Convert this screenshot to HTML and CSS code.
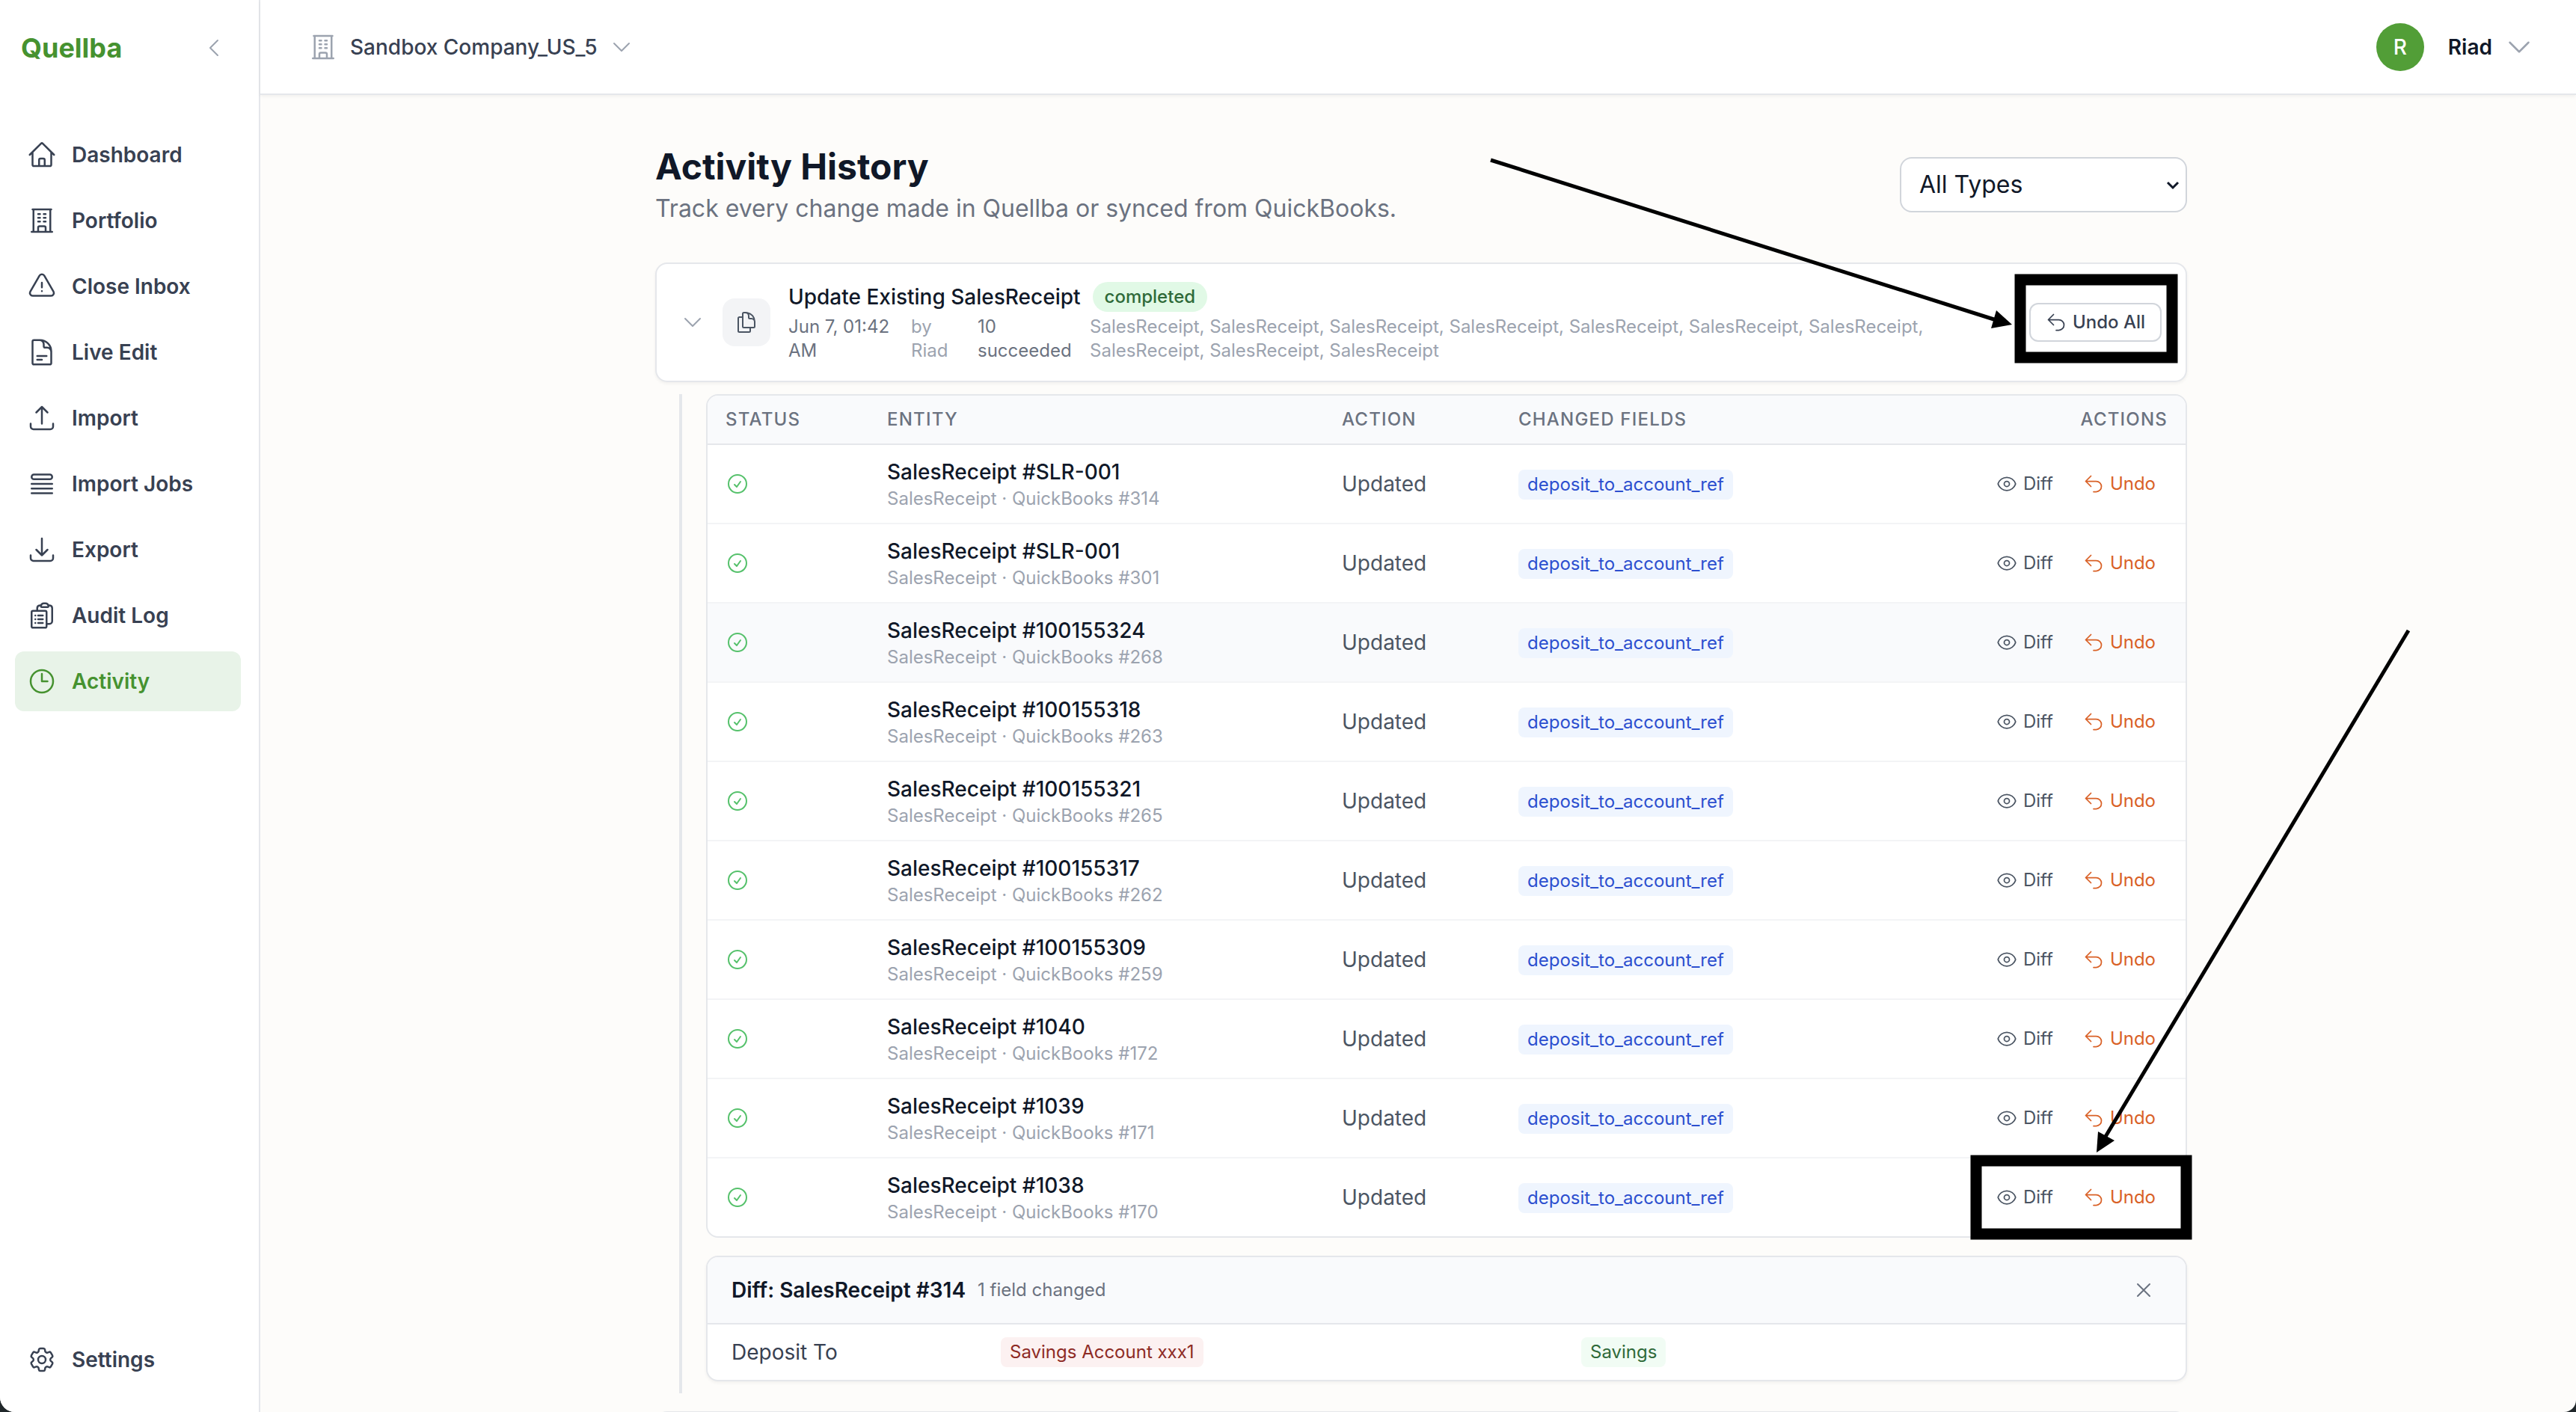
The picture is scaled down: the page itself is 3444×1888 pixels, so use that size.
FILE: index.html
```html
<!DOCTYPE html>
<html lang="en">
<head>
<meta charset="utf-8">
<meta name="viewport" content="width=device-width, initial-scale=1">
<title>Activity History - Quellba</title>
<link rel="stylesheet" href="styles.css">
</head>
<body>
<svg class="sprite" aria-hidden="true">
  <symbol id="home" viewBox="0 0 24 24"><path d="m2.25 12 8.954-8.955c.44-.439 1.152-.439 1.591 0L21.75 12M4.5 9.75v10.125c0 .621.504 1.125 1.125 1.125H9.75v-4.875c0-.621.504-1.125 1.125-1.125h2.25c.621 0 1.125.504 1.125 1.125V21h4.125c.621 0 1.125-.504 1.125-1.125V9.75M8.25 21h8.25"/></symbol>
  <symbol id="building" viewBox="0 0 24 24"><path d="M3.75 21h16.5M4.5 3h15M5.25 3v18m13.5-18v18M9 6.75h1.5m-1.5 3h1.5m-1.5 3h1.5m3-6H15m-1.5 3H15m-1.5 3H15M9 21v-3.375c0-.621.504-1.125 1.125-1.125h3.75c.621 0 1.125.504 1.125 1.125V21"/></symbol>
  <symbol id="warning" viewBox="0 0 24 24"><path d="M12 9v3.75m-9.303 3.376c-.866 1.5.217 3.374 1.948 3.374h14.71c1.73 0 2.813-1.874 1.948-3.374L13.949 3.378c-.866-1.5-3.032-1.5-3.898 0L2.697 16.126ZM12 15.75h.007v.008H12v-.008Z"/></symbol>
  <symbol id="document" viewBox="0 0 24 24"><path d="M19.5 14.25v-2.625a3.375 3.375 0 0 0-3.375-3.375h-1.5A1.125 1.125 0 0 1 13.5 7.125v-1.5a3.375 3.375 0 0 0-3.375-3.375H8.25m0 12.75h7.5m-7.5 3H12M10.5 2.25H5.625c-.621 0-1.125.504-1.125 1.125v17.25c0 .621.504 1.125 1.125 1.125h12.75c.621 0 1.125-.504 1.125-1.125V11.25a9 9 0 0 0-9-9Z"/></symbol>
  <symbol id="upload" viewBox="0 0 24 24"><path d="M3 16.5v2.25A2.25 2.25 0 0 0 5.25 21h13.5A2.25 2.25 0 0 0 21 18.75V16.5m-13.5-9L12 3m0 0 4.5 4.5M12 3v13.5"/></symbol>
  <symbol id="queue" viewBox="0 0 24 24"><path d="M3.75 12h16.5m-16.5 3.75h16.5M3.75 19.5h16.5M5.625 4.5h12.75a1.875 1.875 0 0 1 0 3.75H5.625a1.875 1.875 0 0 1 0-3.75Z"/></symbol>
  <symbol id="download" viewBox="0 0 24 24"><path d="M3 16.5v2.25A2.25 2.25 0 0 0 5.25 21h13.5A2.25 2.25 0 0 0 21 18.75V16.5M16.5 12 12 16.5m0 0L7.5 12m4.5 4.5V3"/></symbol>
  <symbol id="clipboard" viewBox="0 0 24 24"><path d="M9 12h3.75M9 15h3.75M9 18h3.75m3 .75H18a2.25 2.25 0 0 0 2.25-2.25V6.108c0-1.135-.845-2.098-1.976-2.192a48.424 48.424 0 0 0-1.123-.08m-5.801 0c-.065.21-.1.433-.1.664 0 .414.336.75.75.75h4.5a.75.75 0 0 0 .75-.75 2.25 2.25 0 0 0-.1-.664m-5.8 0A2.251 2.251 0 0 1 13.5 2.25H15c1.012 0 1.867.668 2.15 1.586m-5.8 0c-.376.023-.75.05-1.124.08C9.095 4.01 8.25 4.973 8.25 6.108V8.25m0 0H4.875c-.621 0-1.125.504-1.125 1.125v11.25c0 .621.504 1.125 1.125 1.125h9.75c.621 0 1.125-.504 1.125-1.125V9.375c0-.621-.504-1.125-1.125-1.125H8.25ZM6.75 12h.008v.008H6.75V12Zm0 3h.008v.008H6.75V15Zm0 3h.008v.008H6.75V18Z"/></symbol>
  <symbol id="clock" viewBox="0 0 24 24"><path d="M12 6v6h4.5m4.5 0a9 9 0 1 1-18 0 9 9 0 0 1 18 0Z"/></symbol>
  <symbol id="gear" viewBox="0 0 24 24"><path d="M9.594 3.94c.09-.542.56-.94 1.11-.94h2.593c.55 0 1.02.398 1.11.94l.213 1.281c.063.374.313.686.645.87.074.04.147.083.22.127.325.196.72.257 1.075.124l1.217-.456a1.125 1.125 0 0 1 1.37.49l1.296 2.247a1.125 1.125 0 0 1-.26 1.431l-1.003.827c-.293.241-.438.613-.43.992a7.723 7.723 0 0 1 0 .255c-.008.378.137.75.43.991l1.004.827c.424.35.534.955.26 1.43l-1.298 2.247a1.125 1.125 0 0 1-1.369.491l-1.217-.456c-.355-.133-.75-.072-1.076.124a6.47 6.47 0 0 1-.22.128c-.331.183-.581.495-.644.869l-.213 1.281c-.09.543-.56.94-1.11.94h-2.594c-.55 0-1.019-.398-1.11-.94l-.213-1.281c-.062-.374-.312-.686-.644-.87a6.52 6.52 0 0 1-.22-.127c-.325-.196-.72-.257-1.076-.124l-1.217.456a1.125 1.125 0 0 1-1.369-.49l-1.297-2.247a1.125 1.125 0 0 1 .26-1.431l1.004-.827c.292-.24.437-.613.43-.991a6.932 6.932 0 0 1 0-.255c.007-.38-.138-.751-.43-.992l-1.004-.827a1.125 1.125 0 0 1-.26-1.43l1.297-2.247a1.125 1.125 0 0 1 1.37-.491l1.216.456c.356.133.751.072 1.076-.124.072-.044.146-.086.22-.128.332-.183.582-.495.644-.869l.214-1.28Z"/><path d="M15 12a3 3 0 1 1-6 0 3 3 0 0 1 6 0Z"/></symbol>
  <symbol id="left" viewBox="0 0 24 24"><path d="M15.75 19.5 8.25 12l7.5-7.5"/></symbol>
  <symbol id="down" viewBox="0 0 24 24"><path d="m19.5 8.25-7.5 7.5-7.5-7.5"/></symbol>
  <symbol id="copy" viewBox="0 0 24 24"><path d="M15.75 17.25v3.375c0 .621-.504 1.125-1.125 1.125h-9.75a1.125 1.125 0 0 1-1.125-1.125V7.875c0-.621.504-1.125 1.125-1.125H6.75a9.06 9.06 0 0 1 1.5.124m7.5 10.376h3.375c.621 0 1.125-.504 1.125-1.125V11.25c0-4.46-3.243-8.161-7.5-8.876a9.06 9.06 0 0 0-1.5-.124H9.375c-.621 0-1.125.504-1.125 1.125v3.5m7.5 10.375H9.375a1.125 1.125 0 0 1-1.125-1.125v-9.25m12 6.625v-1.875a3.375 3.375 0 0 0-3.375-3.375h-1.5a1.125 1.125 0 0 1-1.125-1.125v-1.5a3.375 3.375 0 0 0-3.375-3.375H9.75"/></symbol>
  <symbol id="undo" viewBox="0 0 24 24"><path d="M9 15 3 9m0 0 6-6M3 9h12a6 6 0 0 1 0 12h-3"/></symbol>
  <symbol id="check" viewBox="0 0 24 24"><path d="M9 12.75 11.25 15 15 9.75M21 12a9 9 0 1 1-18 0 9 9 0 0 1 18 0Z"/></symbol>
  <symbol id="eye" viewBox="0 0 24 24"><path d="M2.036 12.322a1.012 1.012 0 0 1 0-.639C3.423 7.51 7.36 4.5 12 4.5c4.638 0 8.573 3.007 9.963 7.178.07.207.07.431 0 .639C20.577 16.49 16.64 19.5 12 19.5c-4.638 0-8.573-3.007-9.963-7.178Z"/><path d="M15 12a3 3 0 1 1-6 0 3 3 0 0 1 6 0Z"/></symbol>
  <symbol id="close" viewBox="0 0 24 24"><path d="M6 18 18 6M6 6l12 12"/></symbol>
</svg>

<div class="app">
  <aside class="sidebar">
    <div class="brand">
      <a class="logo" href="#">Quellba</a>
      <button class="plain" aria-label="Collapse sidebar"><svg class="icon icon-md"><use href="#left"/></svg></button>
    </div>
    <nav class="nav">
      <a href="#"><svg class="icon"><use href="#home"/></svg>Dashboard</a>
      <a href="#"><svg class="icon"><use href="#building"/></svg>Portfolio</a>
      <a href="#"><svg class="icon"><use href="#warning"/></svg>Close Inbox</a>
      <a href="#"><svg class="icon"><use href="#document"/></svg>Live Edit</a>
      <a href="#"><svg class="icon"><use href="#upload"/></svg>Import</a>
      <a href="#"><svg class="icon"><use href="#queue"/></svg>Import Jobs</a>
      <a href="#"><svg class="icon"><use href="#download"/></svg>Export</a>
      <a href="#"><svg class="icon"><use href="#clipboard"/></svg>Audit Log</a>
      <a href="#" class="active" aria-current="page"><svg class="icon"><use href="#clock"/></svg>Activity</a>
      <a href="#" class="settings"><svg class="icon"><use href="#gear"/></svg>Settings</a>
    </nav>
  </aside>

  <div class="page">
    <header class="topbar">
      <button class="company">
        <svg class="icon"><use href="#building"/></svg>
        <span>Sandbox Company_US_5</span>
        <svg class="icon icon-md"><use href="#down"/></svg>
      </button>
      <button class="user">
        <span class="avatar">R</span>
        <span class="user-name">Riad</span>
        <svg class="icon"><use href="#down"/></svg>
      </button>
    </header>

    <main class="main">
      <div class="content">
        <div class="heading">
          <div>
            <h1>Activity History</h1>
            <p>Track every change made in Quellba or synced from QuickBooks.</p>
          </div>
          <div class="filter">
            <select aria-label="Activity type"><option>All Types</option></select>
            <svg class="filter-arrow" viewBox="0 0 18 12"><path d="m2 2 7 7 7-7"/></svg>
          </div>
        </div>

        <section class="card job">
          <svg class="icon icon-md muted"><use href="#down"/></svg>
          <span class="tile"><svg class="icon icon-md"><use href="#copy"/></svg></span>
          <div class="job-body">
            <div class="job-title"><h2>Update Existing SalesReceipt</h2><span class="badge">completed</span></div>
            <div class="meta">
              <span>Jun 7, 01:42 AM</span>
              <span class="muted">by Riad</span>
              <span>10 succeeded</span>
              <span class="muted">SalesReceipt, SalesReceipt, SalesReceipt, SalesReceipt, SalesReceipt, SalesReceipt, SalesReceipt, SalesReceipt, SalesReceipt, SalesReceipt</span>
            </div>
          </div>
          <button class="undo-all"><svg class="icon icon-sm"><use href="#undo"/></svg>Undo All</button>
        </section>

        <div class="details">
          <div class="table-box">
            <table>
              <colgroup><col class="c-status"><col class="c-entity"><col class="c-action"><col><col class="c-buttons"></colgroup>
              <thead>
                <tr><th>Status</th><th>Entity</th><th>Action</th><th>Changed Fields</th><th class="right">Actions</th></tr>
              </thead>
              <tbody>
                <tr>
                  <td><svg class="icon icon-md ok"><use href="#check"/></svg></td>
                  <td><div class="name">SalesReceipt #SLR-001</div><div class="ref">SalesReceipt · QuickBooks #314</div></td>
                  <td>Updated</td>
                  <td><span class="chip">deposit_to_account_ref</span></td>
                  <td><div class="actions"><button><svg class="icon icon-sm"><use href="#eye"/></svg>Diff</button><button class="undo"><svg class="icon icon-sm"><use href="#undo"/></svg>Undo</button></div></td>
                </tr>
                <tr>
                  <td><svg class="icon icon-md ok"><use href="#check"/></svg></td>
                  <td><div class="name">SalesReceipt #SLR-001</div><div class="ref">SalesReceipt · QuickBooks #301</div></td>
                  <td>Updated</td>
                  <td><span class="chip">deposit_to_account_ref</span></td>
                  <td><div class="actions"><button><svg class="icon icon-sm"><use href="#eye"/></svg>Diff</button><button class="undo"><svg class="icon icon-sm"><use href="#undo"/></svg>Undo</button></div></td>
                </tr>
                <tr class="hovered">
                  <td><svg class="icon icon-md ok"><use href="#check"/></svg></td>
                  <td><div class="name">SalesReceipt #100155324</div><div class="ref">SalesReceipt · QuickBooks #268</div></td>
                  <td>Updated</td>
                  <td><span class="chip">deposit_to_account_ref</span></td>
                  <td><div class="actions"><button><svg class="icon icon-sm"><use href="#eye"/></svg>Diff</button><button class="undo"><svg class="icon icon-sm"><use href="#undo"/></svg>Undo</button></div></td>
                </tr>
                <tr>
                  <td><svg class="icon icon-md ok"><use href="#check"/></svg></td>
                  <td><div class="name">SalesReceipt #100155318</div><div class="ref">SalesReceipt · QuickBooks #263</div></td>
                  <td>Updated</td>
                  <td><span class="chip">deposit_to_account_ref</span></td>
                  <td><div class="actions"><button><svg class="icon icon-sm"><use href="#eye"/></svg>Diff</button><button class="undo"><svg class="icon icon-sm"><use href="#undo"/></svg>Undo</button></div></td>
                </tr>
                <tr>
                  <td><svg class="icon icon-md ok"><use href="#check"/></svg></td>
                  <td><div class="name">SalesReceipt #100155321</div><div class="ref">SalesReceipt · QuickBooks #265</div></td>
                  <td>Updated</td>
                  <td><span class="chip">deposit_to_account_ref</span></td>
                  <td><div class="actions"><button><svg class="icon icon-sm"><use href="#eye"/></svg>Diff</button><button class="undo"><svg class="icon icon-sm"><use href="#undo"/></svg>Undo</button></div></td>
                </tr>
                <tr>
                  <td><svg class="icon icon-md ok"><use href="#check"/></svg></td>
                  <td><div class="name">SalesReceipt #100155317</div><div class="ref">SalesReceipt · QuickBooks #262</div></td>
                  <td>Updated</td>
                  <td><span class="chip">deposit_to_account_ref</span></td>
                  <td><div class="actions"><button><svg class="icon icon-sm"><use href="#eye"/></svg>Diff</button><button class="undo"><svg class="icon icon-sm"><use href="#undo"/></svg>Undo</button></div></td>
                </tr>
                <tr>
                  <td><svg class="icon icon-md ok"><use href="#check"/></svg></td>
                  <td><div class="name">SalesReceipt #100155309</div><div class="ref">SalesReceipt · QuickBooks #259</div></td>
                  <td>Updated</td>
                  <td><span class="chip">deposit_to_account_ref</span></td>
                  <td><div class="actions"><button><svg class="icon icon-sm"><use href="#eye"/></svg>Diff</button><button class="undo"><svg class="icon icon-sm"><use href="#undo"/></svg>Undo</button></div></td>
                </tr>
                <tr>
                  <td><svg class="icon icon-md ok"><use href="#check"/></svg></td>
                  <td><div class="name">SalesReceipt #1040</div><div class="ref">SalesReceipt · QuickBooks #172</div></td>
                  <td>Updated</td>
                  <td><span class="chip">deposit_to_account_ref</span></td>
                  <td><div class="actions"><button><svg class="icon icon-sm"><use href="#eye"/></svg>Diff</button><button class="undo"><svg class="icon icon-sm"><use href="#undo"/></svg>Undo</button></div></td>
                </tr>
                <tr>
                  <td><svg class="icon icon-md ok"><use href="#check"/></svg></td>
                  <td><div class="name">SalesReceipt #1039</div><div class="ref">SalesReceipt · QuickBooks #171</div></td>
                  <td>Updated</td>
                  <td><span class="chip">deposit_to_account_ref</span></td>
                  <td><div class="actions"><button><svg class="icon icon-sm"><use href="#eye"/></svg>Diff</button><button class="undo"><svg class="icon icon-sm"><use href="#undo"/></svg>Undo</button></div></td>
                </tr>
                <tr>
                  <td><svg class="icon icon-md ok"><use href="#check"/></svg></td>
                  <td><div class="name">SalesReceipt #1038</div><div class="ref">SalesReceipt · QuickBooks #170</div></td>
                  <td>Updated</td>
                  <td><span class="chip">deposit_to_account_ref</span></td>
                  <td><div class="actions"><button><svg class="icon icon-sm"><use href="#eye"/></svg>Diff</button><button class="undo"><svg class="icon icon-sm"><use href="#undo"/></svg>Undo</button></div></td>
                </tr>
              </tbody>
            </table>
          </div>

          <section class="card diff">
            <div class="diff-head">
              <h3>Diff: SalesReceipt #314</h3>
              <span class="diff-count">1 field changed</span>
              <button class="plain diff-close" aria-label="Close diff"><svg class="icon icon-md"><use href="#close"/></svg></button>
            </div>
            <div class="diff-row">
              <span>Deposit To</span>
              <span><span class="chip old">Savings Account xxx1</span></span>
              <span><span class="chip new">Savings</span></span>
            </div>
          </section>
        </div>

        <section class="card next"></section>

        <!-- Callouts drawn over the undo controls -->
        <svg class="callouts" viewBox="-1 0 2048 1696" aria-hidden="true">
          <path class="line" d="M1116 23 1795 238"/>
          <path class="head" d="m1813 243-21-19-7 24Z"/>
          <rect class="frame" x="1824" y="183" width="203" height="104"/>
          <path class="line" d="M2343 652 1936 1332"/>
          <path class="head" d="m1926 1350 2-28 22 12Z"/>
          <rect class="frame" x="1765" y="1361" width="281" height="98"/>
        </svg>
      </div>
    </main>
  </div>
</div>
</body>
</html>
```
FILE: styles.css
```css
* { box-sizing: border-box; }

body {
  margin: 0;
  background: #20272a;
  color: #101828;
  font: 400 28px/40px Inter, "Liberation Sans", sans-serif;
}

h1, h2, h3, p { margin: 0; }

button {
  font: inherit;
  color: inherit;
  background: none;
  border: 0;
  padding: 0;
  display: flex;
  align-items: center;
}

.sprite { display: none; }

.icon {
  width: 40px;
  height: 40px;
  flex: none;
  display: block;
  fill: none;
  stroke: currentColor;
  stroke-width: 1.5;
  stroke-linecap: round;
  stroke-linejoin: round;
}
.icon-md { width: 32px; height: 32px; }
.icon-sm { width: 28px; height: 28px; }

.muted, .plain { color: #9ca3af; }
.ok { color: #55c16b; }

.app {
  display: flex;
  height: 100vh;
  overflow: hidden;
  background: #fdfcfa;
  border-radius: 0 0 16px 20px;
}

/* Sidebar */
.sidebar {
  width: 348px;
  flex: none;
  display: flex;
  flex-direction: column;
  background: #fff;
  border-right: 2px solid #e5e7eb;
}
.brand {
  display: flex;
  align-items: center;
  justify-content: space-between;
  height: 127px;
  padding: 0 44px 0 28px;
}
.logo {
  color: #469230;
  font-size: 36px;
  font-weight: 700;
  text-decoration: none;
}
.nav {
  flex: 1;
  display: flex;
  flex-direction: column;
  gap: 8px;
  padding: 40px 24px 30px 20px;
}
.nav a {
  display: flex;
  align-items: center;
  gap: 20px;
  height: 80px;
  padding: 0 16px;
  border-radius: 12px;
  color: #384152;
  font-weight: 600;
  text-decoration: none;
}
.nav a.active { background: #e8f3e8; color: #469230; }
.nav a.settings { margin-top: auto; }

/* Top bar */
.page {
  flex: 1;
  min-width: 0;
  display: flex;
  flex-direction: column;
}
.topbar {
  display: flex;
  align-items: center;
  justify-content: space-between;
  height: 127px;
  flex: none;
  padding: 0 56px 0 64px;
  background: #fff;
  border-bottom: 2px solid #e5e7eb;
  box-shadow: 0 2px 4px rgb(0 0 0 / 5%);
}
.company { gap: 16px; color: #384152; font-weight: 500; }
.company .icon { color: #9ca3af; }
.user { gap: 16px; }
.user .icon { color: #9ca3af; }
.avatar {
  width: 64px;
  height: 64px;
  margin-right: 16px;
  border-radius: 50%;
  background: #529e37;
  color: #fff;
  font-weight: 500;
  line-height: 64px;
  text-align: center;
}
.user-name { font-weight: 600; }

/* Content */
.main {
  flex: 1;
  min-height: 0;
  overflow: hidden;
  padding: 64px 0 0 8px;
}
.content {
  position: relative;
  max-width: 2048px;
  margin: 0 auto;
}
.heading {
  display: flex;
  align-items: center;
  justify-content: space-between;
  margin-bottom: 48px;
}
h1 { font-size: 48px; line-height: 64px; font-weight: 700; }
.heading p { font-size: 32px; line-height: 48px; color: #6b7280; }

.filter { position: relative; }
.filter select {
  appearance: none;
  display: block;
  width: 384px;
  height: 74px;
  padding: 0 24px;
  border: 2px solid #d1d5db;
  border-radius: 16px;
  background: #fff;
  color: #101828;
  font: inherit;
  font-size: 32px;
}
.filter-arrow {
  position: absolute;
  right: 10px;
  top: 32px;
  width: 18px;
  height: 12px;
  fill: none;
  stroke: #101828;
  stroke-width: 3;
  pointer-events: none;
}

.card {
  background: #fff;
  border: 2px solid #e5e7eb;
  border-radius: 16px;
  box-shadow: 0 2px 4px rgb(0 0 0 / 5%);
}

.job {
  display: flex;
  align-items: center;
  gap: 24px;
  padding: 24px 32px;
}
.tile {
  width: 64px;
  height: 64px;
  flex: none;
  display: grid;
  place-items: center;
  border-radius: 16px;
  background: #f3f4f6;
  color: #4b5563;
}
.job-body { flex: 1; min-width: 0; }
.job-title { display: flex; align-items: center; gap: 16px; }
h2 { font-size: 28px; font-weight: 500; }
.badge {
  padding: 0 16px;
  border-radius: 20px;
  background: #e1f9e6;
  color: #2f6a39;
  font-size: 24px;
  font-weight: 500;
}
.meta {
  display: grid;
  grid-template-columns: 140px 65px 126px 1fr;
  column-gap: 24px;
  margin-top: 4px;
  color: #6b7280;
  font-size: 24px;
  line-height: 32px;
}
.meta .muted { color: #9ca3af; }
.undo-all {
  gap: 8px;
  height: 52px;
  padding: 0 20px;
  border: 2px solid #d1d5db;
  border-radius: 12px;
  background: #fff;
  color: #384152;
  font-size: 24px;
  font-weight: 500;
}

/* Job details */
.details {
  margin: 16px 0 24px 32px;
  padding: 0 0 16px 32px;
  border-left: 4px solid #e5e7eb;
}
.table-box {
  overflow: hidden;
  border: 2px solid #e5e7eb;
  border-radius: 16px;
  background: #fff;
}
table {
  width: 100%;
  table-layout: fixed;
  border-spacing: 0;
}
.c-status { width: 216px; }
.c-entity { width: 608px; }
.c-action { width: 236px; }
.c-buttons { width: 320px; }
th {
  padding: 16px 24px;
  border-bottom: 2px solid #e5e7eb;
  background: #f9fafc;
  color: #6b7280;
  font-size: 24px;
  line-height: 32px;
  font-weight: 500;
  letter-spacing: 0.05em;
  text-align: left;
  text-transform: uppercase;
}
th.right { text-align: right; }
td {
  padding: 16px 24px;
  border-bottom: 2px solid #f3f4f6;
  color: #4b5563;
  vertical-align: middle;
}
tbody tr:last-child td { border-bottom: 0; }
.hovered { background: #f9fafc; }
.name { color: #101828; font-weight: 500; }
.ref { color: #9ca3af; font-size: 24px; line-height: 32px; }
.chip {
  display: inline-block;
  padding: 0 12px;
  border-radius: 8px;
  background: #eff5fe;
  color: #2c4fcf;
  font-size: 24px;
  vertical-align: middle;
}
.chip.old { background: #fcf1f1; color: #8e2b25; }
.chip.new { background: #f1fcf4; color: #2f6a39; }
.actions {
  display: flex;
  justify-content: flex-end;
  gap: 8px;
  font-size: 24px;
}
.actions button { gap: 8px; padding: 0 16px; }
.actions .undo { color: #d96127; }

/* Diff panel */
.diff { margin-top: 24px; overflow: hidden; }
.diff-head {
  display: flex;
  align-items: center;
  gap: 16px;
  height: 90px;
  padding: 0 32px;
  border-bottom: 2px solid #e5e7eb;
  background: #f9fafc;
}
h3 { font-size: 28px; font-weight: 600; }
.diff-count { color: #6b7280; font-size: 24px; }
.diff-close { margin-left: auto; padding: 8px; color: #6b7280; }
.diff-row {
  display: grid;
  grid-template-columns: 360px 1fr 1fr;
  align-items: center;
  padding: 17px 32px;
  color: #384152;
}
.diff-row > span { display: flex; }

.next { height: 160px; }

.callouts {
  position: absolute;
  top: 0;
  left: 0;
  width: 2048px;
  height: 1696px;
  overflow: visible;
  pointer-events: none;
}
.callouts .line { fill: none; stroke: #000; stroke-width: 5; }
.callouts .head { fill: #000; }
.callouts .frame { fill: none; stroke: #000; stroke-width: 15; }
```
